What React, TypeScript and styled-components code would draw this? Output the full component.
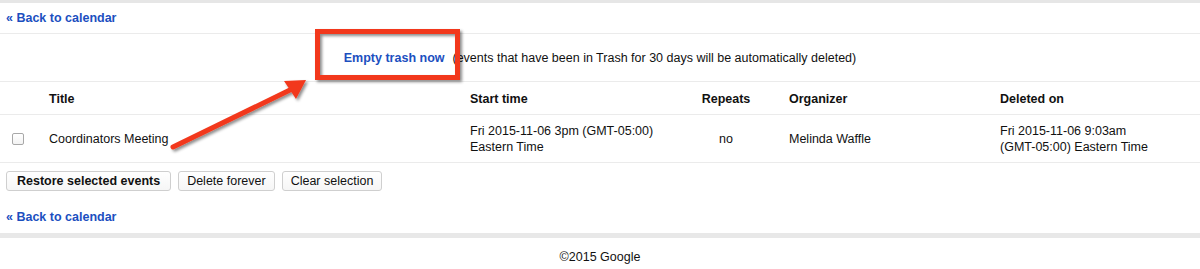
import React from 'react';
import styled, { createGlobalStyle } from 'styled-components';

const GlobalStyle = createGlobalStyle`
  html, body {
    margin: 0;
    padding: 0;
    background: #fff;
  }
  body {
    font-family: "Liberation Sans", Arial, sans-serif;
    font-size: 12.5px;
    color: #222;
  }
  * { box-sizing: border-box; }
`;

const linkBlue = '#1c4fbf';
const rule = '#ebebeb';

const Page = styled.div`
  position: relative;
  width: 1200px;
  height: 269px;
  overflow: hidden;
`;

const TopBar = styled.div`
  height: 3px;
  background: #e6e6e6;
`;

const BackRow = styled.div<{ $bottom?: boolean }>`
  display: flex;
  align-items: center;
  height: ${p => (p.$bottom ? '42px' : '31px')};
  padding-left: 6px;
  padding-top: ${p => (p.$bottom ? '10px' : '0')};
  border-bottom: ${p => (p.$bottom ? 'none' : `1px solid ${rule}`)};
`;

const BackLink = styled.a`
  color: ${linkBlue};
  font-weight: bold;
  text-decoration: none;
`;

const Notice = styled.div`
  display: flex;
  justify-content: center;
  align-items: center;
  gap: 8px;
  height: 48px;
  border-bottom: 1px solid ${rule};
`;

const NoticeText = styled.span`
  color: #111;
`;

const Grid = styled.div<{ $height: number; $head?: boolean }>`
  display: grid;
  grid-template-columns: 41px 421px 209px 110px 211px 1fr;
  align-items: center;
  height: ${p => p.$height}px;
  padding-top: ${p => (p.$head ? '2px' : '0')};
  border-bottom: 1px solid ${rule};
`;

const HeadCell = styled.div<{ $center?: boolean }>`
  font-weight: bold;
  color: #111;
  padding-left: ${p => (p.$center ? '0' : '8px')};
  text-align: ${p => (p.$center ? 'center' : 'left')};
`;

const Cell = styled.div<{ $center?: boolean }>`
  color: #111;
  line-height: 16px;
  padding-left: ${p => (p.$center ? '0' : '8px')};
  text-align: ${p => (p.$center ? 'center' : 'left')};
`;

const CheckCell = styled.div`
  padding-left: 12px;
  display: flex;
  align-items: center;
`;

const Box = styled.span`
  display: inline-block;
  width: 12px;
  height: 12px;
  border: 1px solid #a8a8a8;
  border-radius: 2px;
  background: linear-gradient(#fff, #f3f3f3);
`;

const Actions = styled.div`
  display: flex;
  gap: 7px;
  padding: 8px 0 0 6px;
  height: 28px;
`;

const Button = styled.button<{ $primary?: boolean }>`
  font-family: inherit;
  font-size: 12.5px;
  font-weight: ${p => (p.$primary ? 'bold' : 'normal')};
  color: #111;
  height: 20px;
  padding: ${p => (p.$primary ? '0 10px' : '0 8px')};
  background: linear-gradient(#ffffff, #f6f6f6);
  border: 1px solid #cfcfcf;
  border-radius: 3px;
  line-height: 18px;
`;

const BottomBar = styled.div`
  height: 5px;
  background: #e8e8e8;
`;

const Footer = styled.div`
  text-align: center;
  padding-top: 12px;
  line-height: 14px;
  color: #111;
`;

const Annotation = styled.svg`
  position: absolute;
  left: 0;
  top: 0;
  pointer-events: none;
`;

const App = () => {
  return (
    <Page>
      <GlobalStyle />
      <TopBar />
      <BackRow>
        <BackLink href="#">« Back to calendar</BackLink>
      </BackRow>
      <Notice>
        <BackLink href="#">Empty trash now</BackLink>
        <NoticeText>(events that have been in Trash for 30 days will be automatically deleted)</NoticeText>
      </Notice>
      <Grid $height={33} $head>
        <div />
        <HeadCell>Title</HeadCell>
        <HeadCell>Start time</HeadCell>
        <HeadCell $center>Repeats</HeadCell>
        <HeadCell>Organizer</HeadCell>
        <HeadCell>Deleted on</HeadCell>
      </Grid>
      <Grid $height={48}>
        <CheckCell>
          <Box />
        </CheckCell>
        <Cell>Coordinators Meeting</Cell>
        <Cell>
          Fri 2015-11-06 3pm (GMT-05:00)
          <br />
          Eastern Time
        </Cell>
        <Cell $center>no</Cell>
        <Cell>Melinda Waffle</Cell>
        <Cell>
          Fri 2015-11-06 9:03am
          <br />
          (GMT-05:00) Eastern Time
        </Cell>
      </Grid>
      <Actions>
        <Button $primary>Restore selected events</Button>
        <Button>Delete forever</Button>
        <Button>Clear selection</Button>
      </Actions>
      <BackRow $bottom>
        <BackLink href="#">« Back to calendar</BackLink>
      </BackRow>
      <BottomBar />
      <Footer>©2015 Google</Footer>

      {/* red callout drawn over the page */}
      <Annotation width="1200" height="269" viewBox="0 0 1200 269">
        <defs>
          <filter id="shade" x="-20%" y="-20%" width="140%" height="140%">
            <feDropShadow dx="2" dy="2" stdDeviation="1.6" floodColor="#000" floodOpacity="0.45" />
          </filter>
        </defs>
        <g filter="url(#shade)">
          <rect x="317.5" y="31.5" width="140" height="46" fill="none" stroke="#f2381d" strokeWidth="5" />
          <line x1="173" y1="147" x2="292" y2="89" stroke="#f2381d" strokeWidth="5" strokeLinecap="round" />
          <polygon points="306,80 284,81 296,99" fill="#f2381d" />
        </g>
      </Annotation>
    </Page>
  );
};

export default App;
